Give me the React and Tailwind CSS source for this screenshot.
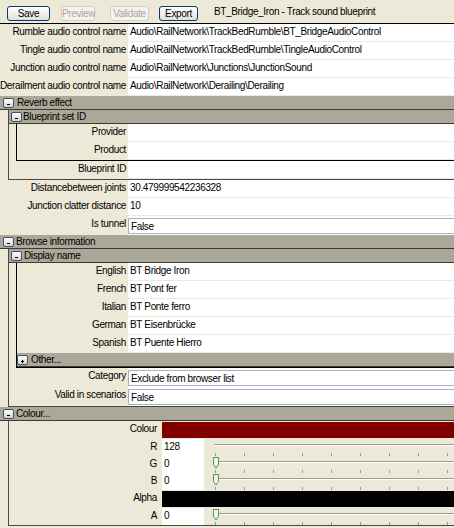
import React from "react";

function Toggle({ open = true }) {
  return (
    <div className="relative w-[11px] h-[10px] shrink-0 rounded-[2px] border border-[#3a5279] bg-linear-to-b from-white to-[#d8d5c8]">
      {open ? (
        <div className="absolute left-[3px] top-[5px] w-[3px] h-[1px] bg-black" />
      ) : (
        <>
          <div className="absolute left-[3px] top-[5px] w-[3px] h-[1px] bg-black" />
          <div className="absolute left-[4px] top-[4px] w-[1px] h-[3px] bg-black" />
        </>
      )}
    </div>
  );
}

function Header({ title, open = true, pad = "pl-[3px]", gap = "ml-[3px]" }) {
  return (
    <div className={`h-[14px] bg-[#aca899] border-b border-[#3b3a33] flex items-center ${pad}`}>
      <Toggle open={open} />
      <span className={`${gap} leading-[13px] whitespace-nowrap`}>{title}</span>
    </div>
  );
}

function Row({ label, value, lw = "w-[128px]", combo = false }) {
  if (combo) {
    return (
      <div className="flex h-[19px]">
        <div className={`${lw} shrink-0 text-right pr-[2px] leading-[16px] whitespace-nowrap`}>{label}</div>
        <div className="flex-1 bg-white pt-[2px] min-w-0">
          <div className="h-[16px] border-t border-l border-b border-[#a6b3c4] pl-[2px] leading-[15px] whitespace-nowrap">
            {value}
          </div>
        </div>
      </div>
    );
  }
  return (
    <div className="flex h-[18px]">
      <div className={`${lw} shrink-0 text-right pr-[2px] leading-[16px] whitespace-nowrap`}>{label}</div>
      <div className="flex-1 min-w-0 bg-white border-b border-[#ebeae2] pl-[2px] leading-[16px] whitespace-nowrap overflow-hidden">
        {value}
      </div>
    </div>
  );
}

function Slider({ thumb = false }) {
  const ticks = [0, 1, 2, 3, 4, 5, 6, 7, 8];
  return (
    <div className="relative flex-1 min-w-0 overflow-hidden">
      <div className="absolute left-[1px] right-0 top-[5px] h-[2px] border-t border-[#9c9a8f] border-b border-b-white" />
      <div className="absolute left-[2px] top-[14px] flex gap-[28px]">
        {ticks.map((t) => (
          <div key={t} className="w-[1px] h-[3px] bg-[#9c9a8f]" />
        ))}
      </div>
      {thumb && (
        <svg className="absolute left-0 top-[1px]" width="7" height="12" viewBox="0 0 7 12">
          <path d="M0.5 0.5 H5.5 V7.5 L3 11 L0.5 7.5 Z" fill="#f4f3ee" stroke="#4a9a4a" strokeWidth="1" />
        </svg>
      )}
    </div>
  );
}

function ColourRow({ label, children, h = "h-[17px]" }) {
  return (
    <div className={`flex ${h}`}>
      <div className="w-[152px] shrink-0 text-right pr-[4px] leading-[15px]">{label}</div>
      <div className="flex-1 min-w-0 flex">{children}</div>
    </div>
  );
}

function NumRow({ label, value, thumb, h }) {
  return (
    <ColourRow label={label} h={h}>
      <div className="w-[42px] ml-[1px] shrink-0 bg-white pl-[2px] leading-[15px]">{value}</div>
      <div className="w-[9px] shrink-0" />
      <Slider thumb={thumb} />
    </ColourRow>
  );
}

export default function App() {
  return (
    <div className="w-[454px] h-[528px] overflow-hidden bg-[#ece9d8] text-[10px] tracking-[-0.35px] text-black font-['Liberation_Sans',Arial,sans-serif]">
      {/* toolbar */}
      <div className="h-[24px] border-b border-black flex items-start pt-[6px] pl-[7px]">
        <button className="w-[43px] h-[15px] rounded-[3px] border border-[#003c74] bg-linear-to-b from-white to-[#e3e0d3] leading-[13px] text-[10px]">
          Save
        </button>
        <button className="ml-[11px] w-[34px] h-[15px] rounded-[3px] border border-[#d2d0c4] bg-[#f4f3ee] text-[#aca899] leading-[13px] text-[10px]">
          Preview
        </button>
        <button className="ml-[15px] w-[39px] h-[15px] rounded-[3px] border border-[#d2d0c4] bg-[#f4f3ee] text-[#aca899] leading-[13px] text-[10px]">
          Validate
        </button>
        <button className="ml-[10px] w-[39px] h-[15px] rounded-[3px] border border-[#003c74] bg-linear-to-b from-white to-[#e3e0d3] leading-[13px] text-[10px]">
          Export
        </button>
        <span className="ml-[16px] leading-[12px] whitespace-nowrap">BT_Bridge_Iron - Track sound blueprint</span>
      </div>

      <Row label="Rumble audio control name" value="Audio\RailNetwork\TrackBedRumble\BT_BridgeAudioControl" />
      <Row label="Tingle audio control name" value="Audio\RailNetwork\TrackBedRumble\TingleAudioControl" />
      <Row label="Junction audio control name" value="Audio\RailNetwork\Junctions\JunctionSound" />
      <Row label="Derailment audio control name" value="Audio\RailNetwork\Derailing\Derailing" />

      {/* Reverb effect */}
      <Header title="Reverb effect" />
      <div className="ml-[8px] border-l border-b border-[#4a4942]">
        <Header title="Blueprint set ID" pad="pl-[2px]" gap="ml-[1px]" />
        <div className="ml-[7px] border-l border-b border-black">
          <Row label="Provider" value="" lw="w-[111px]" />
          <Row label="Product" value="" lw="w-[111px]" />
        </div>
        <Row label="Blueprint ID" value="" lw="w-[119px]" />
      </div>
      <Row label="Distancebetween joints" value="30.479999542236328" />
      <Row label="Junction clatter distance" value="10" />
      <Row label="Is tunnel" value="False" combo />

      {/* Browse information */}
      <Header title="Browse information" gap="ml-[2px]" />
      <div className="ml-[8px] border-l border-b border-[#4a4942]">
        <Header title="Display name" pad="pl-[2px]" gap="ml-[2px]" />
        <div className="ml-[7px] border-l border-b border-black">
          <Row label="English" value="BT Bridge Iron" lw="w-[111px]" />
          <Row label="French" value="BT Pont fer" lw="w-[111px]" />
          <Row label="Italian" value="BT Ponte ferro" lw="w-[111px]" />
          <Row label="German" value="BT Eisenbrücke" lw="w-[111px]" />
          <Row label="Spanish" value="BT Puente Hierro" lw="w-[111px]" />
          <Header title="Other..." open={false} pad="pl-0" gap="ml-[3px]" />
        </div>
        <Row label="Category" value="Exclude from browser list" lw="w-[119px]" combo />
        <Row label="Valid in scenarios" value="False" lw="w-[119px]" combo />
      </div>

      {/* Colour */}
      <Header title="Colour..." gap="ml-[2px]" />
      <div className="ml-[8px] border-l border-b border-[#4a4942]">
        <ColourRow label="Colour" h="h-[18px]">
          <div className="flex-1 ml-[1px] my-[1px] bg-[#800000]" />
        </ColourRow>
        <NumRow label="R" value="128" />
        <NumRow label="G" value="0" thumb />
        <NumRow label="B" value="0" thumb />
        <ColourRow label="Alpha" h="h-[18px]">
          <div className="flex-1 ml-[1px] my-[1px] bg-black" />
        </ColourRow>
        <NumRow label="A" value="0" thumb />
      </div>
    </div>
  );
}
